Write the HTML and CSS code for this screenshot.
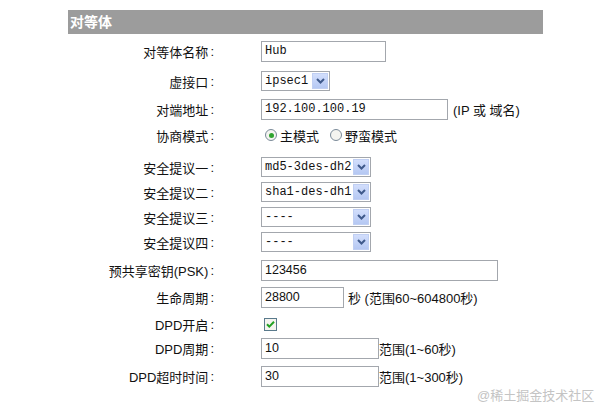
FILE: index.html
```html
<!DOCTYPE html>
<html lang="zh-CN">
<head>
    <meta charset="UTF-8">
    <meta name="viewport" content="width=device-width, initial-scale=1.0">
    <title>对等体</title>
    <link rel="stylesheet" href="styles.css">
</head>
<body>
    <div class="panel">
        <div class="panel-title">对等体</div>

        <div class="form">
            <div class="label">对等体名称</div>
            <div class="field"><input class="text mono w-name" type="text" value="Hub"></div>

            <div class="label">虚接口</div>
            <div class="field">
                <span class="select w-small"><span class="select-value">ipsec1</span><span class="select-arrow"><svg width="9" height="6" viewBox="0 0 9 6"><path d="M1 1 L4.5 4.5 L8 1" fill="none" stroke="#3f5a8c" stroke-width="2"/></svg></span></span>
            </div>

            <div class="label">对端地址</div>
            <div class="field"><input class="text mono w-addr" type="text" value="192.100.100.19"><span class="hint gap5">(IP 或 域名)</span></div>

            <div class="label">协商模式</div>
            <div class="field">
                <span class="radio checked"></span><span class="radio-text">主模式</span>
                <span class="radio second"></span><span class="radio-text">野蛮模式</span>
            </div>

            <div class="label">安全提议一</div>
            <div class="field">
                <span class="select w-prop"><span class="select-value">md5-3des-dh2</span><span class="select-arrow"><svg width="9" height="6" viewBox="0 0 9 6"><path d="M1 1 L4.5 4.5 L8 1" fill="none" stroke="#3f5a8c" stroke-width="2"/></svg></span></span>
            </div>

            <div class="label">安全提议二</div>
            <div class="field">
                <span class="select w-prop"><span class="select-value">sha1-des-dh1</span><span class="select-arrow"><svg width="9" height="6" viewBox="0 0 9 6"><path d="M1 1 L4.5 4.5 L8 1" fill="none" stroke="#3f5a8c" stroke-width="2"/></svg></span></span>
            </div>

            <div class="label">安全提议三</div>
            <div class="field">
                <span class="select w-prop"><span class="select-value">----</span><span class="select-arrow"><svg width="9" height="6" viewBox="0 0 9 6"><path d="M1 1 L4.5 4.5 L8 1" fill="none" stroke="#3f5a8c" stroke-width="2"/></svg></span></span>
            </div>

            <div class="label">安全提议四</div>
            <div class="field">
                <span class="select w-prop"><span class="select-value">----</span><span class="select-arrow"><svg width="9" height="6" viewBox="0 0 9 6"><path d="M1 1 L4.5 4.5 L8 1" fill="none" stroke="#3f5a8c" stroke-width="2"/></svg></span></span>
            </div>

            <div class="label">预共享密钥(PSK)</div>
            <div class="field"><input class="text w-psk" type="text" value="123456"></div>

            <div class="label">生命周期</div>
            <div class="field"><input class="text w-life" type="text" value="28800"><span class="hint gap4">秒 (范围60~604800秒)</span></div>

            <div class="label">DPD开启</div>
            <div class="field">
                <svg class="check" width="13" height="13" viewBox="0 0 13 13">
                    <rect x="0.5" y="0.5" width="12" height="12" fill="#f4f4f0" stroke="#5a7a8c"/>
                    <path d="M3 6.2 L5.3 8.6 L10 3.8" fill="none" stroke="#21a121" stroke-width="2"/>
                </svg>
            </div>

            <div class="label">DPD周期</div>
            <div class="field"><input class="text w-dpd" type="text" value="10"><span class="hint">范围(1~60秒)</span></div>

            <div class="label">DPD超时时间</div>
            <div class="field"><input class="text w-dpd" type="text" value="30"><span class="hint">范围(1~300秒)</span></div>
        </div>
    </div>

    <div class="watermark">@稀土掘金技术社区</div>
</body>
</html>
```

FILE: styles.css
```css
body {
    margin: 0;
    background: #fff;
    color: #111;
    font-family: "Liberation Sans", "Noto Sans CJK SC", sans-serif;
    font-size: 13px;
    width: 603px;
    height: 412px;
    position: relative;
    overflow: hidden;
}

.panel {
    padding: 10px 0 0 68px;
}

.panel-title {
    width: 473px;
    height: 24px;
    line-height: 24px;
    padding-left: 2px;
    background: #9c9c9c;
    color: #fff;
    font-weight: bold;
    font-size: 14px;
}

.form {
    display: grid;
    grid-template-columns: 146px auto;
    grid-template-rows: 30px 28px 26px 32px 25px 25px 25px 28px 27px 27px 24px 28px 22px;
    column-gap: 47px;
    margin-top: 6px;
}

.label, .field {
    height: 22px;
    display: flex;
    align-items: center;
}

.label {
    justify-content: flex-end;
}

.label::after {
    content: ":";
    margin-left: 2px;
}

.text {
    box-sizing: border-box;
    height: 21px;
    margin: 0;
    padding: 0 3px;
    border: 1px solid #a3a7ad;
    background: #fff;
    color: #111;
    font-family: "Liberation Sans", "Noto Sans CJK SC", sans-serif;
    font-size: 12.5px;
}

.mono {
    font-family: "Liberation Mono", monospace;
    font-size: 12px;
}

.w-name { width: 125px; }
.w-addr { width: 187px; }
.w-psk { width: 237px; }
.w-life { width: 83px; }
.w-dpd { width: 118px; }

.hint {
    white-space: nowrap;
}

.gap4 { margin-left: 4px; }
.gap5 { margin-left: 5px; }

.select {
    box-sizing: border-box;
    height: 20px;
    display: flex;
    align-items: center;
    justify-content: space-between;
    border: 1px solid #a3a7ad;
    background: #fff;
    padding: 1px;
}

.w-small { width: 69px; }
.w-prop { width: 110px; }

.select-value {
    padding-left: 2px;
    font-family: "Liberation Mono", monospace;
    font-size: 12px;
}

.select-arrow {
    box-sizing: border-box;
    width: 16px;
    height: 16px;
    display: flex;
    align-items: center;
    justify-content: center;
    background: linear-gradient(#d2defc, #b5c8f3);
    border: 1px solid #c0cff3;
}

.radio {
    box-sizing: border-box;
    width: 12px;
    height: 12px;
    margin-left: 4px;
    border-radius: 50%;
    border: 1px solid #7a8a99;
    background: #f4f4f0;
    position: relative;
}

.radio.second {
    margin-left: 11px;
}

.radio.checked::after {
    content: "";
    position: absolute;
    left: 2.5px;
    top: 2.5px;
    width: 5px;
    height: 5px;
    border-radius: 50%;
    background: #2fa32f;
}

.radio-text {
    margin-left: 3px;
}

.check {
    margin-left: 3px;
}

.watermark {
    position: absolute;
    left: 477px;
    top: 385px;
    font-size: 13px;
    color: #c4c4c4;
}
```
